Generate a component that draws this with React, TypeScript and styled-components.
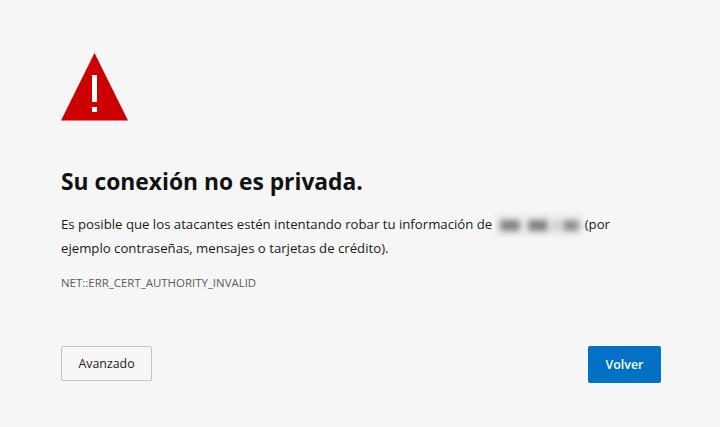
import React from "react";
import styled, { createGlobalStyle } from "styled-components";

const Global = createGlobalStyle`
  html, body { margin: 0; padding: 0; background: #f6f6f6; }
  body { font-family: "Open Sans", "Liberation Sans", sans-serif; }
`;
const Page = styled.main`
  width: 720px; height: 427px; box-sizing: border-box; padding: 53px 59px 0 61px;
  background: #f6f6f6; display: flex; flex-direction: column; overflow: hidden;
`;
const Icon = styled.svg`width: 68px; height: 68px; display: block;`;
const Title = styled.h1`
  margin: 45px 0 0; font-size: 22.8px; line-height: 32px; font-weight: 700; color: #111;
`;
const Body = styled.p`
  margin: 14px 0 0; font-size: 13.2px; line-height: 24px; color: #1a1a1a; width: 560px;
`;
const Redacted = styled.span`
  display: inline-flex; align-items: center; box-sizing: border-box; width: 90px; height: 26px;
  margin: -2px 0 -2px -1px; vertical-align: middle; overflow: hidden; background: #f2f2f2;
`;
const Blob = styled.span<{ $w: number; $gap: number; $shade: string }>`
  flex: none; width: ${(p) => p.$w}px; height: 11px; margin-left: ${(p) => p.$gap}px;
  background: ${(p) => p.$shade}; filter: blur(3px);
`;
const Code = styled.div`margin-top: 15px; font-size: 11.45px; line-height: 16px; color: #5a5a5a;`;
const Actions = styled.div`margin-top: 55px; display: flex; justify-content: space-between; align-items: flex-start;`;
const Secondary = styled.button`
  width: 91px; height: 35px; box-sizing: border-box; border: 1px solid #c4c4c4; border-radius: 2px;
  background: #f6f6f6; color: #222; font: 400 12.4px "Open Sans", sans-serif; padding: 0;
`;
const Primary = styled.button`
  width: 73px; height: 37px; box-sizing: border-box; border: 0; border-radius: 2px;
  background: #0071c5; color: #fff; font: 600 12.4px "Open Sans", sans-serif; padding: 0;
`;
export default function App() {
  return (
    <Page>
      <Global />
      <Icon viewBox="0 0 68 68" aria-hidden="true">
        <path d="M33.5 0 L67 67.6 L0 67.6 Z" fill="#cc0000" />
        <rect x="31" y="22" width="5" height="27" fill="#fff" />
        <rect x="31" y="54" width="5" height="5" fill="#fff" />
      </Icon>
      <Title>Su conexión no es privada.</Title>
      <Body>
        Es posible que los atacantes estén intentando robar tu información de{" "}
        <Redacted aria-hidden="true">
          <Blob $w={20} $gap={5} $shade="#7f7f7f" />
          <Blob $w={20} $gap={8} $shade="#7c7c7c" />
          <Blob $w={11} $gap={2} $shade="#cfcfcf" />
          <Blob $w={16} $gap={2} $shade="#8c8c8c" />
        </Redacted>
        (por ejemplo contraseñas, mensajes o tarjetas de crédito).
      </Body>
      <Code>NET::ERR_CERT_AUTHORITY_INVALID</Code>
      <Actions>
        <Secondary>Avanzado</Secondary>
        <Primary>Volver</Primary>
      </Actions>
    </Page>
  );
}
